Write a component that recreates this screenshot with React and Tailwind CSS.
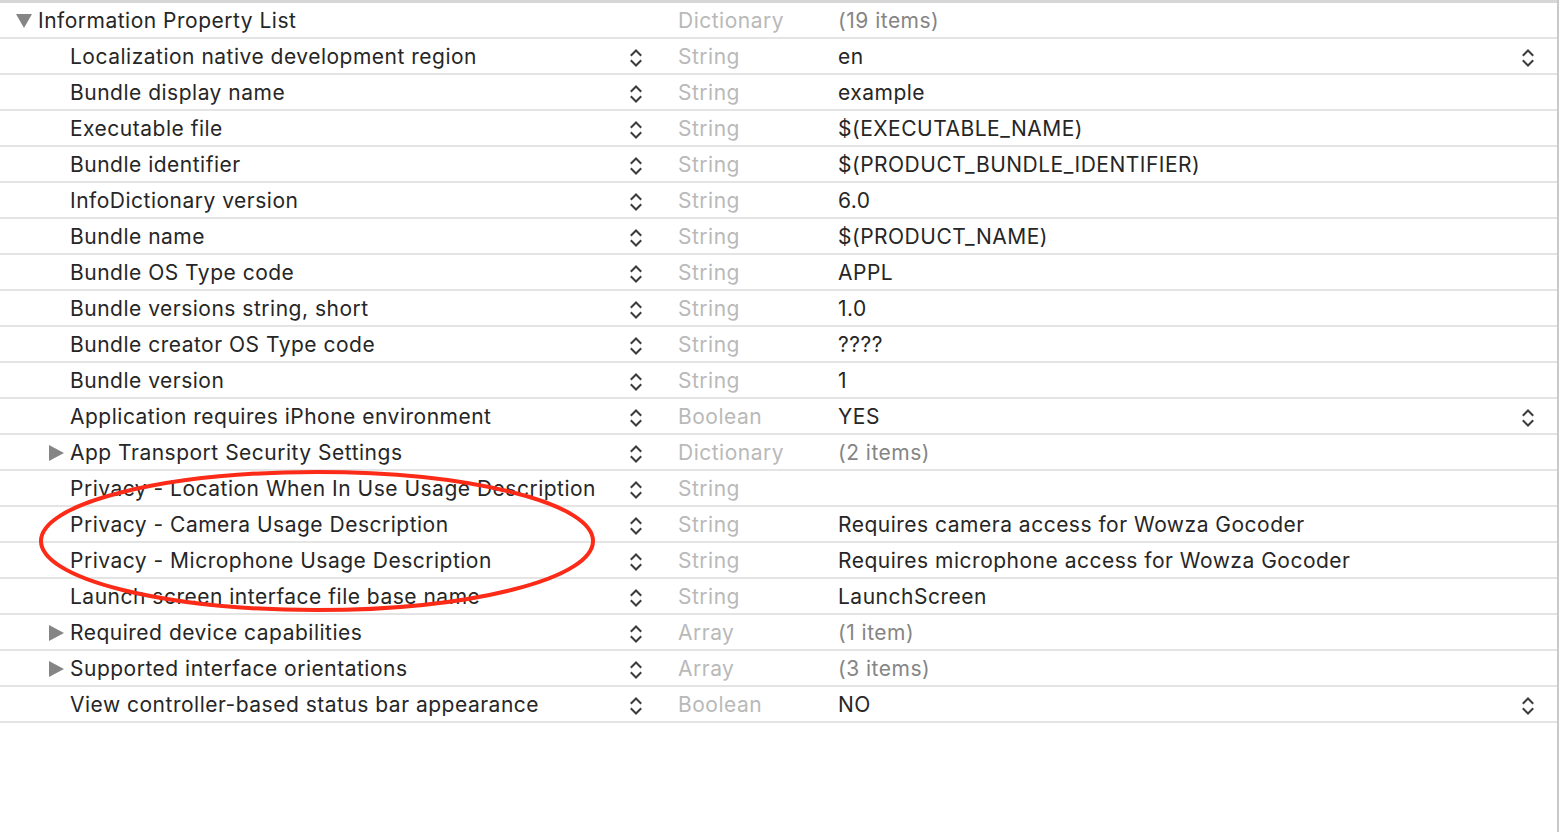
import React from 'react';

const rows = [
  { key: 'Localization native development region', type: 'String', value: 'en', popup: true },
  { key: 'Bundle display name', type: 'String', value: 'example' },
  { key: 'Executable file', type: 'String', value: '$(EXECUTABLE_NAME)' },
  { key: 'Bundle identifier', type: 'String', value: '$(PRODUCT_BUNDLE_IDENTIFIER)' },
  { key: 'InfoDictionary version', type: 'String', value: '6.0' },
  { key: 'Bundle name', type: 'String', value: '$(PRODUCT_NAME)' },
  { key: 'Bundle OS Type code', type: 'String', value: 'APPL' },
  { key: 'Bundle versions string, short', type: 'String', value: '1.0' },
  { key: 'Bundle creator OS Type code', type: 'String', value: '????' },
  { key: 'Bundle version', type: 'String', value: '1' },
  { key: 'Application requires iPhone environment', type: 'Boolean', value: 'YES', popup: true },
  { key: 'App Transport Security Settings', type: 'Dictionary', value: '(2 items)', folder: true },
  { key: 'Privacy - Location When In Use Usage Description', type: 'String', value: '' },
  { key: 'Privacy - Camera Usage Description', type: 'String', value: 'Requires camera access for Wowza Gocoder' },
  { key: 'Privacy - Microphone Usage Description', type: 'String', value: 'Requires microphone access for Wowza Gocoder' },
  { key: 'Launch screen interface file base name', type: 'String', value: 'LaunchScreen' },
  { key: 'Required device capabilities', type: 'Array', value: '(1 item)', folder: true },
  { key: 'Supported interface orientations', type: 'Array', value: '(3 items)', folder: true },
  { key: 'View controller-based status bar appearance', type: 'Boolean', value: 'NO', popup: true },
];

const Stepper = () => (
  <svg width="14" height="22" viewBox="0 0 14 22" fill="none" stroke="#3c3c3c" strokeWidth="2" strokeLinecap="square">
    <path d="M2.5 8 L7 3.5 L11.5 8" />
    <path d="M2.5 14 L7 18.5 L11.5 14" />
  </svg>
);

const Row = ({ r }) => (
  <div className="flex items-center h-[36px] pt-[2px] border-b-2 border-[#e4e4e4] text-[21px] tracking-[0.5px] text-[#262626]">
    <div className="w-[620px] flex items-center shrink-0">
      <div className="w-[70px] shrink-0 flex justify-start pl-[49px]">
        {r.folder && (
          <svg width="15" height="16" viewBox="0 0 15 16"><path d="M0 0 L15 8 L0 16 Z" fill="#858585" /></svg>
        )}
      </div>
      <span className="whitespace-nowrap">{r.key}</span>
    </div>
    <div className="w-[32px] shrink-0 flex justify-center pt-[2px]"><Stepper /></div>
    <div className="w-[26px] shrink-0" />
    <div className="w-[160px] shrink-0 text-[#b9b9b9]">{r.type}</div>
    <div className={`flex-1 ${r.folder ? 'text-[#858585]' : ''}`}>{r.value}</div>
    {r.popup && <div className="w-[30px] mr-[14px] flex justify-center pt-[2px]"><Stepper /></div>}
  </div>
);

export default function App() {
  return (
    <div className="relative w-[1562px] h-[832px] bg-white overflow-hidden" style={{ fontFamily: 'Inter, "Noto Sans", sans-serif' }}>
      <div className="w-[1559px] h-full border-r-2 border-[#c9c9c9]">
        <div className="h-[3px] bg-[#d6d6d6]" />
        <div className="flex items-center h-[36px] pt-[2px] border-b-2 border-[#e4e4e4] text-[21px] tracking-[0.5px] text-[#262626]">
          <div className="w-[678px] shrink-0 flex items-center">
            <div className="w-[38px] shrink-0 pl-[16px]">
              <svg width="16" height="14" viewBox="0 0 16 14"><path d="M0 0 L16 0 L8 14 Z" fill="#858585" /></svg>
            </div>
            <span>Information Property List</span>
          </div>
          <div className="w-[160px] shrink-0 text-[#b9b9b9]">Dictionary</div>
          <div className="flex-1 text-[#858585]">(19 items)</div>
        </div>
        {rows.map((r, i) => <Row key={i} r={r} />)}
      </div>
      <svg className="absolute left-0 top-0 pointer-events-none" width="1562" height="832">
        <ellipse cx="317" cy="541" rx="276" ry="69" fill="none" stroke="#fb2b18" strokeWidth="4" />
      </svg>
    </div>
  );
}
